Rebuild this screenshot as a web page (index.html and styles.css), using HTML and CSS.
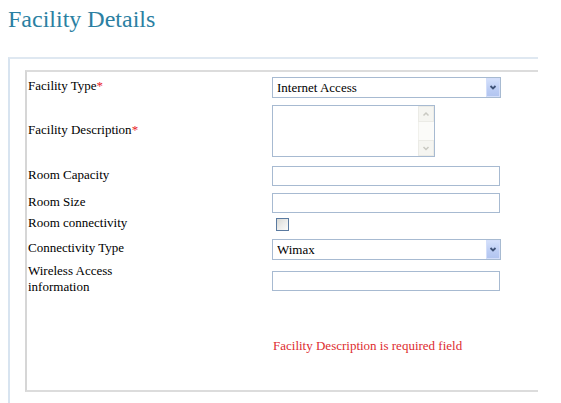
FILE: index.html
```html
<!DOCTYPE html>
<html lang="en">
<head>
<meta charset="utf-8">
<title>Facility Details</title>
<link rel="stylesheet" href="styles.css">
</head>
<body>
<h1 class="title">Facility Details</h1>
<div class="panel">
  <div class="box">
    <div class="form">
      <div class="label">Facility Type<span class="req">*</span></div>
      <div class="ctrl">
        <div class="select-wrap">
          <select class="select"><option>Internet Access</option></select>
          <span class="drop"><svg width="14" height="19" viewBox="0 0 14 19"><path d="M4.5 8 L7 10.5 L9.5 8" fill="none" stroke="#3f5277" stroke-width="1.8"/></svg></span>
        </div>
      </div>

      <div class="label">Facility Description<span class="req">*</span></div>
      <div class="ctrl">
        <div class="area-wrap">
          <textarea class="area"></textarea>
          <span class="vscroll">
            <span class="sbtn"><svg width="14" height="14" viewBox="0 0 14 14"><path d="M4.5 8.5 L7 6 L9.5 8.5" fill="none" stroke="#c9c9c2" stroke-width="1.5"/></svg></span>
            <span class="strack"></span>
            <span class="sbtn"><svg width="14" height="14" viewBox="0 0 14 14"><path d="M4.5 6 L7 8.5 L9.5 6" fill="none" stroke="#c9c9c2" stroke-width="1.5"/></svg></span>
          </span>
        </div>
      </div>

      <div class="label">Room Capacity</div>
      <div class="ctrl"><input class="text" type="text"></div>

      <div class="label">Room Size</div>
      <div class="ctrl"><input class="text" type="text"></div>

      <div class="label">Room connectivity</div>
      <div class="ctrl"><input class="check" type="checkbox"></div>

      <div class="label">Connectivity Type</div>
      <div class="ctrl">
        <div class="select-wrap">
          <select class="select"><option>Wimax</option></select>
          <span class="drop"><svg width="14" height="19" viewBox="0 0 14 19"><path d="M4.5 8 L7 10.5 L9.5 8" fill="none" stroke="#3f5277" stroke-width="1.8"/></svg></span>
        </div>
      </div>

      <div class="label">Wireless Access information</div>
      <div class="ctrl"><input class="text" type="text"></div>
    </div>
    <div class="error">Facility Description is required field</div>
  </div>
</div>
</body>
</html>
```

FILE: styles.css
```css
html, body {
  margin: 0;
  padding: 0;
  background: #ffffff;
  overflow: hidden;
  font-family: "Liberation Serif", "Times New Roman", serif;
  color: #000;
}

.title {
  margin: 0;
  padding: 5px 0 0 8px;
  font-family: "Liberation Serif", "Times New Roman", serif;
  font-size: 24px;
  line-height: 28px;
  font-weight: normal;
  color: #2b7fa2;
}

.panel {
  margin: 24px 0 0 8px;
  width: 528px;
  height: 344px;
  border-top: 2px solid #dfe8f1;
  border-left: 2px solid #d8e4f0;
  padding-top: 11px;
  box-sizing: content-box;
}

.box {
  margin-left: 15px;
  width: 511px;
  height: 318px;
  border-top: 2px solid #dcdcdc;
  border-left: 2px solid #d6d6d6;
  border-bottom: 2px solid #dcdcdc;
}

.form {
  display: grid;
  grid-template-columns: 244px 1fr;
  grid-template-rows: 26px 62px 28px 26px 17px 32px 31px;
  align-items: center;
  padding: 2px 0 0 1px;
}

.label {
  font-size: 13px;
  line-height: 16px;
  max-width: 130px;
  padding-bottom: 3px;
}

.req {
  color: #e8202a;
}

.ctrl {
  display: flex;
  align-items: center;
}

.select-wrap {
  position: relative;
  width: 229px;
  height: 21px;
}

.select {
  appearance: none;
  -webkit-appearance: none;
  box-sizing: border-box;
  width: 229px;
  height: 21px;
  margin: 0;
  padding: 0 0 0 4px;
  border: 1px solid #a7bad1;
  border-radius: 0;
  background: #fff;
  font-family: "Liberation Serif", "Times New Roman", serif;
  font-size: 13px;
  color: #000;
}

.drop {
  position: absolute;
  top: 1px;
  right: 1px;
  width: 14px;
  height: 19px;
  box-sizing: border-box;
  border: 1px solid #d3defa;
  background: linear-gradient(180deg, #d4e0fb 0%, #bccdf4 60%, #b2c5f0 100%);
  pointer-events: none;
  display: flex;
}

.drop svg {
  margin: -1px;
}

.area-wrap {
  position: relative;
  width: 163px;
  height: 52px;
}

.area {
  box-sizing: border-box;
  width: 163px;
  height: 52px;
  margin: 0;
  padding: 0;
  border: 1px solid #a7bad1;
  resize: none;
  overflow: hidden;
  display: block;
  font-family: "Liberation Serif", "Times New Roman", serif;
  font-size: 13px;
}

.vscroll {
  position: absolute;
  top: 1px;
  right: 1px;
  bottom: 1px;
  width: 16px;
  display: flex;
  flex-direction: column;
  background: #fbfbf9;
  pointer-events: none;
}

.sbtn {
  height: 16px;
  box-sizing: border-box;
  border: 1px solid #ebebe6;
  background: #f5f5f1;
  display: flex;
  align-items: center;
  justify-content: center;
}

.strack {
  flex: 1;
  border-left: 1px solid #f1f1ec;
}

.text {
  box-sizing: border-box;
  width: 228px;
  height: 20px;
  margin: 0;
  padding: 0 3px;
  border: 1px solid #a7bad1;
  border-radius: 0;
  background: #fff;
  font-family: "Liberation Serif", "Times New Roman", serif;
  font-size: 13px;
}

.check {
  appearance: none;
  -webkit-appearance: none;
  box-sizing: border-box;
  width: 13px;
  height: 13px;
  margin: 0 0 0 4px;
  border: 1px solid #5a7aa0;
  border-radius: 0;
  background: linear-gradient(135deg, #d9d9d4 0%, #ececea 50%, #fbfbfa 100%);
}

.error {
  margin-top: 42px;
  padding-left: 246px;
  font-size: 13px;
  line-height: 16px;
  color: #dd2b2f;
}
```
